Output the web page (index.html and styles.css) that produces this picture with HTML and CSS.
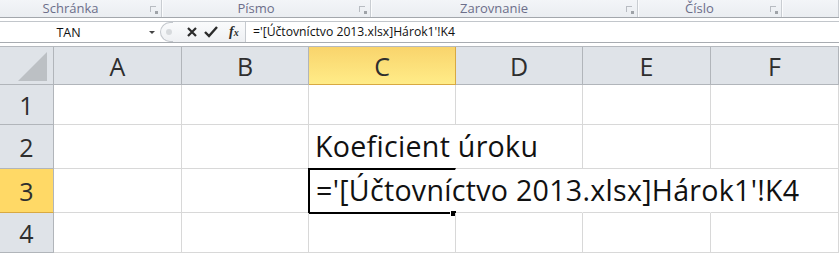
FILE: index.html
```html
<!DOCTYPE html>
<html lang="sk">
<head>
  <meta charset="UTF-8" />
  <title>Hárok1</title>
  <link rel="stylesheet" href="styles.css">
</head>
<body>
  <div class="ribbon">
    <div class="group"><span>Schránka</span><i class="launcher"></i></div>
    <div class="group"><span>Písmo</span><i class="launcher"></i></div>
    <div class="group"><span>Zarovnanie</span><i class="launcher"></i></div>
    <div class="group"><span>Číslo</span><i class="launcher"></i></div>
    <div class="group"></div>
  </div>

  <div class="formula-bar">
    <div class="name-box">
      <span>TAN</span>
      <i class="drop"></i>
    </div>
    <div class="buttons">
      <span class="grip"><i></i></span>
      <svg class="btn" width="14" height="14" viewBox="0 0 14 14"><path d="M3 3 L11 11 M11 3 L3 11" stroke="#2b2b2b" stroke-width="2.2"/></svg>
      <svg class="btn" width="16" height="14" viewBox="0 0 16 14"><path d="M2 7 L6 11 L14 2" fill="none" stroke="#2b2b2b" stroke-width="2.4"/></svg>
      <span class="fx">f<small>x</small></span>
    </div>
    <div class="formula">='[Účtovníctvo 2013.xlsx]Hárok1'!K4</div>
  </div>

  <div class="sheet">
    <div class="corner">
      <svg width="30" height="29" viewBox="0 0 30 29"><polygon points="29,0 29,29 0,29" fill="#bcc0c4"/></svg>
    </div>
    <div class="col-head">A</div>
    <div class="col-head">B</div>
    <div class="col-head active">C</div>
    <div class="col-head">D</div>
    <div class="col-head">E</div>
    <div class="col-head">F</div>

    <div class="row-head">1</div>
    <div class="cell"></div><div class="cell"></div><div class="cell"></div><div class="cell"></div><div class="cell"></div><div class="cell"></div>

    <div class="row-head">2</div>
    <div class="cell"></div><div class="cell"></div>
    <div class="cell spill"><span class="text">Koeficient úroku</span></div>
    <div class="cell"></div><div class="cell"></div><div class="cell"></div>

    <div class="row-head active">3</div>
    <div class="cell"></div><div class="cell"></div>
    <div class="cell spill selected"><span class="text">='[Účtovníctvo 2013.xlsx]Hárok1'!K4</span></div>
    <div class="cell spill"></div><div class="cell spill"></div><div class="cell"></div>

    <div class="row-head">4</div>
    <div class="cell"></div><div class="cell"></div><div class="cell"></div><div class="cell"></div><div class="cell"></div><div class="cell"></div>
  </div>
</body>
</html>
```

FILE: styles.css
```css
body {
  margin: 0;
  width: 839px;
  height: 253px;
  overflow: hidden;
  background: #fff;
  font-family: "Open Sans", "Noto Sans", sans-serif;
}

/* ribbon group captions */
.ribbon {
  display: grid;
  grid-template-columns: 162px 209px 267px 144px 1fr;
  height: 17px;
  background: linear-gradient(#f3f5f8, #eaedf1);
  border-bottom: 1px solid #a3a7ac;
}

.group {
  position: relative;
  padding-right: 20px;
  border-right: 1px solid #c9cdd2;
  box-shadow: 1px 0 0 #fbfcfd;
  text-align: center;
  font-size: 13px;
  line-height: 17px;
  color: #6c6e8a;
}

.launcher {
  position: absolute;
  right: 5px;
  top: 6px;
  width: 5px;
  height: 5px;
  border-left: 1px solid #b8bcc2;
  border-top: 1px solid #b8bcc2;
}

.launcher::after {
  content: "";
  position: absolute;
  right: -2px;
  bottom: -2px;
  width: 3px;
  height: 3px;
  background: #9fa3a8;
}

/* formula bar */
.formula-bar {
  display: flex;
  height: 20px;
  margin-top: 3px;
  border-top: 1px solid #c2c6cb;
  border-bottom: 1px solid #a8acb1;
  background: #fff;
  font-size: 12.2px;
  color: #111;
}

.name-box {
  width: 160px;
  display: flex;
  align-items: center;
  box-sizing: border-box;
}

.name-box span {
  flex: 1;
  text-align: center;
  padding-right: 12px;
  font-size: 12.5px;
}

.drop {
  width: 0;
  height: 0;
  margin-right: 5px;
  border-left: 3px solid transparent;
  border-right: 3px solid transparent;
  border-top: 3px solid #444;
}

.buttons {
  width: 85px;
  display: flex;
  align-items: center;
  gap: 4px;
  border-right: 1px solid #c6cacf;
  background: linear-gradient(#fafbfc, #eef0f3);
  border-radius: 10px 0 0 10px;
}

.grip {
  width: 12px;
  height: 18px;
  border: 1px solid #c3c7cc;
  border-right: none;
  border-radius: 10px 0 0 10px;
  display: flex;
  align-items: center;
  justify-content: center;
  margin-right: 8px;
}

.grip i {
  width: 6px;
  height: 6px;
  border-radius: 50%;
  background: #d7dadd;
  margin-left: 4px;
}

.fx {
  margin-left: 6px;
  font-family: "Liberation Serif", serif;
  font-style: italic;
  font-weight: bold;
  font-size: 14px;
  color: #2b2b2b;
}

.fx small {
  font-size: 10px;
}

.formula {
  flex: 1;
  padding-left: 7px;
  line-height: 20px;
  white-space: nowrap;
}

/* worksheet grid */
.sheet {
  display: grid;
  grid-template-columns: 54px 128px 127px 147px 127px 128px 128px;
  grid-template-rows: 38px 40px 44px 44px 40px;
  margin-top: 3px;
  border-top: 1px solid #b5b9be;
}

.corner {
  background: #dfe3e8;
  border-right: 1px solid #b1b5ba;
  border-bottom: 1px solid #b1b5ba;
  display: flex;
  align-items: flex-end;
  justify-content: flex-end;
  padding: 0 5px 3px 0;
}

.col-head,
.row-head {
  background: #dfe3e8;
  border-right: 1px solid #b1b5ba;
  border-bottom: 1px solid #b1b5ba;
  color: #2e2e2e;
  font-size: 25px;
  display: flex;
  align-items: center;
  justify-content: center;
}

.col-head.active {
  background: linear-gradient(#f9d46c, #ffec88);
  border-right-color: #d8a942;
  border-bottom-color: #d8a942;
}

.row-head.active {
  background: #ffd966;
  border-bottom-color: #d8a942;
}

.cell {
  border-right: 1px solid #d8d8d8;
  border-bottom: 1px solid #d8d8d8;
  position: relative;
}

.cell.spill {
  border-right-color: transparent;
}

.text {
  position: absolute;
  left: 6px;
  bottom: 3px;
  white-space: nowrap;
  font-size: 28.6px;
  letter-spacing: 0.28px;
  color: #111;
  z-index: 1;
}

.selected {
  margin: -1px 0 -1px -1px;
  border-top: 2px solid #000;
  border-left: 2px solid #000;
  border-bottom: 2px solid #000;
}

.selected::after {
  content: "";
  position: absolute;
  right: -1px;
  bottom: -4px;
  width: 5px;
  height: 5px;
  background: #000;
  border-left: 1px solid #fff;
}
```
